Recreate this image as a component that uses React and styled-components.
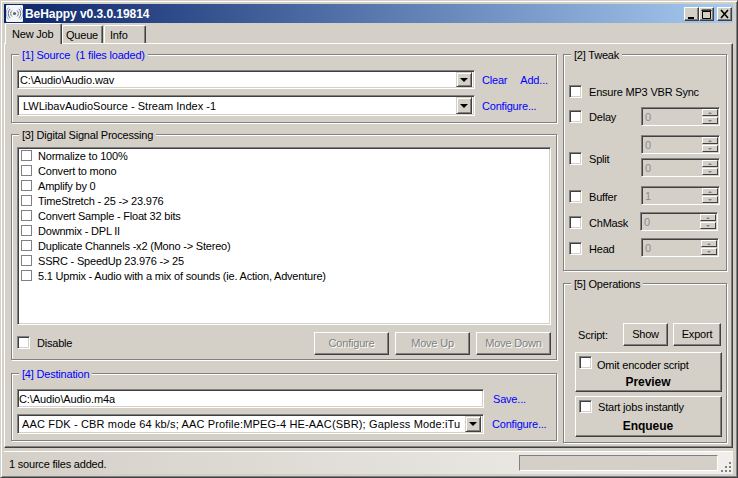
import React from 'react';
import styled, { createGlobalStyle } from 'styled-components';

const Global = createGlobalStyle`
  html, body { margin: 0; padding: 0; background: #d4d0c8; }
  * { box-sizing: border-box; }
`;

const Window = styled.div`
  width: 738px;
  height: 478px;
  background: #d4d0c8;
  border-style: solid;
  border-width: 1px;
  border-color: #d4d0c8 #404040 #404040 #d4d0c8;
  box-shadow: inset 1px 1px 0 #fff, inset -1px -1px 0 #808080;
  padding: 3px;
  display: flex;
  flex-direction: column;
  font: 11px/14px "Liberation Sans", Arial, sans-serif;
  letter-spacing: -0.2px;
  color: #000;
  overflow: hidden;
`;

const TitleBar = styled.div`
  height: 19px;
  flex: none;
  margin: 0 1px 0 0;
  display: flex;
  align-items: center;
  padding: 0 1px 0 2px;
  background: linear-gradient(90deg, #0a246a, #a6caf0);
`;

const AppIcon = styled.svg`
  width: 17px;
  height: 17px;
  flex: none;
`;

const Title = styled.div`
  margin-left: 2px;
  flex: 1;
  color: #fff;
  font: bold 12px/14px "Liberation Sans", Arial, sans-serif;
  letter-spacing: -0.05px;
`;

const CaptionButton = styled.div`
  width: 15px;
  height: 14px;
  margin-left: ${p => p.$gap || 0}px;
  background: #d4d0c8;
  border: 1px solid;
  border-color: #fff #404040 #404040 #fff;
  box-shadow: inset -1px -1px 0 #808080;
  display: flex;
`;

const TabStrip = styled.div`
  height: 21px;
  flex: none;
  display: flex;
  align-items: flex-end;
  padding-left: 1px;
  margin-bottom: -1px;
  position: relative;
  z-index: 1;
`;

const Tab = styled.div`
  width: ${p => p.$w}px;
  height: ${p => (p.$active ? 21 : 18)}px;
  margin-bottom: ${p => (p.$active ? 0 : 1)}px;
  margin-right: ${p => p.$mr || 0}px;
  background: #d4d0c8;
  border-top: 1px solid #fff;
  border-left: 1px solid #fff;
  border-right: 1px solid #404040;
  border-radius: 2px 2px 0 0;
  box-shadow: inset -1px 0 0 #808080;
  padding: ${p => (p.$active ? 3 : 2)}px 0 0 ${p => p.$pl}px;
`;

const TabPage = styled.div`
  height: 405px;
  flex: none;
  margin-right: 1px;
  border: 1px solid;
  border-color: #fff #404040 #404040 #fff;
  box-shadow: inset -1px -1px 0 #808080;
  display: flex;
  padding: 3px 0 0 6px;
  gap: 6px;
`;

const LeftColumn = styled.div`
  width: 546px;
  display: flex;
  flex-direction: column;
  gap: 4px;
`;

const RightColumn = styled.div`
  width: 164px;
  display: flex;
  flex-direction: column;
`;

const Group = styled.fieldset`
  margin: ${p => p.$mt || 0}px 0 0;
  padding: 0;
  min-width: 0;
  height: ${p => p.$h}px;
  flex: none;
  border: 1px solid #808080;
  box-shadow: inset 1px 1px 0 #fff, 1px 1px 0 #fff;
`;

const Legend = styled.legend`
  margin-left: 7px;
  padding: 1px 3px 0 3px;
  height: 14px;
  background: #d4d0c8;
  color: ${p => (p.$blue ? '#0000ff' : '#000')};
  white-space: pre;
`;

const Row = styled.div`
  display: flex;
  align-items: center;
  height: ${p => p.$h}px;
  margin-top: ${p => p.$mt || 0}px;
`;

const Sunken = styled.div`
  width: ${p => p.$w}px;
  height: ${p => p.$h}px;
  flex: none;
  margin-left: ${p => p.$ml || 0}px;
  background: ${p => (p.$disabled ? '#d4d0c8' : '#fff')};
  border: 1px solid;
  border-color: #808080 #fff #fff #808080;
  box-shadow: inset 1px 1px 0 #404040, inset -1px -1px 0 #d4d0c8;
  display: flex;
  align-items: center;
  padding: 0 2px 0 ${p => p.$pl || 3}px;
  white-space: nowrap;
  overflow: hidden;
`;

const ComboText = styled.span`
  flex: 1;
  overflow: hidden;
  letter-spacing: ${p => p.$ls}px;
`;

const DropButton = styled.div`
  width: 16px;
  height: ${p => p.$h || 16}px;
  flex: none;
  background: #d4d0c8;
  border: 1px solid;
  border-color: #d4d0c8 #404040 #404040 #d4d0c8;
  box-shadow: inset 1px 1px 0 #fff, inset -1px -1px 0 #808080;
  display: flex;
  align-items: center;
  justify-content: center;
  &::after {
    content: '';
    border-style: solid;
    border-width: 4px 4px 0;
    border-color: #000 transparent transparent;
  }
`;

const Link = styled.span`
  color: #0000ff;
  margin-left: ${p => p.$ml || 0}px;
  white-space: nowrap;
`;

const ListBox = styled.div`
  width: 534px;
  height: 178px;
  margin: 6px 0 0 5px;
  background: #fff;
  border: 1px solid;
  border-color: #808080 #fff #fff #808080;
  box-shadow: inset 1px 1px 0 #404040, inset -1px -1px 0 #d4d0c8;
  padding: 0 0 0 3px;
`;

const ListItem = styled.div`
  display: flex;
  align-items: center;
  height: 15px;
  white-space: nowrap;
`;

const ListCheck = styled.span`
  width: 11px;
  height: 11px;
  flex: none;
  margin-right: 6px;
  background: #fff;
  border: 1px solid #808080;
`;

const Check = styled.span`
  width: 13px;
  height: 13px;
  flex: none;
  margin-left: ${p => p.$ml || 0}px;
  margin-right: ${p => p.$mr ?? 7}px;
  background: #fff;
  border: 1px solid;
  border-color: #808080 #fff #fff #808080;
  box-shadow: inset 1px 1px 0 #404040, inset -1px -1px 0 #d4d0c8;
  background-clip: padding-box;
`;

const Label = styled.span`
  white-space: nowrap;
  width: ${p => (p.$w ? `${p.$w}px` : 'auto')};
  margin-left: ${p => p.$ml || 0}px;
  flex: ${p => (p.$w ? 'none' : '0 1 auto')};
`;

/* a checkbox and its caption; $drop moves the pair inside a taller row */
const CheckPair = styled.div`
  display: flex;
  align-items: center;
  margin-top: ${p => p.$drop || 0}px;
`;

const Button = styled.div`
  width: ${p => p.$w}px;
  height: ${p => p.$h || 23}px;
  margin-left: ${p => p.$ml || 0}px;
  flex: none;
  background: #d4d0c8;
  border: 1px solid;
  border-color: #fff #404040 #404040 #fff;
  box-shadow: inset -1px -1px 0 #808080;
  display: flex;
  align-items: center;
  justify-content: center;
  padding-bottom: 1px;
  color: ${p => (p.$disabled ? '#808080' : '#000')};
  text-shadow: ${p => (p.$disabled ? '1px 1px 0 #fff' : 'none')};
`;

const Spin = styled(Sunken)`
  padding: 0 1px 0 ${p => p.$pl || 3}px;
  color: #8c8c8c;
  background: #d4d0c8;
  margin-left: auto;
  margin-right: ${p => p.$mr ?? 6}px;
`;

const SpinValue = styled.span`
  flex: 1;
`;

const SpinButtons = styled.div`
  width: 16px;
  height: 15px;
  flex: none;
  display: flex;
  flex-direction: column;
  gap: 1px;
`;

const SpinButton = styled.div`
  flex: 1;
  border: 1px solid;
  border-color: #fff #404040 #404040 #fff;
  display: flex;
  align-items: center;
  justify-content: center;
  &::after {
    content: '';
    border-style: solid;
    border-color: #808080 transparent;
    border-width: ${p => (p.$up ? '0 2px 2px' : '2px 2px 0')};
  }
`;

const SplitBlock = styled.div`
  display: flex;
  flex-direction: column;
  gap: 4px;
  margin-left: auto;
`;

const Bold = styled.div`
  font: bold 12px/14px "Liberation Sans", Arial, sans-serif;
  text-align: center;
  letter-spacing: -0.05px;
  margin: ${p => p.$mt || 0}px 0 0 -4px;
`;

const OpButton = styled.div`
  width: 147px;
  height: ${p => p.$h}px;
  margin: ${p => p.$mt || 0}px 0 0 11px;
  flex: none;
  background: #d4d0c8;
  border: 1px solid;
  border-color: #fff #404040 #404040 #fff;
  box-shadow: inset -1px -1px 0 #808080;
  padding: 3px 0 0 3px;
`;

const OpHeader = styled.div`
  display: flex;
  align-items: center;
  height: 13px;
`;

const OpCaption = styled.span`
  margin-top: ${p => p.$mt || 0}px;
`;

const StatusBar = styled.div`
  flex: 1;
  margin: 3px 1px 0 0;
  display: flex;
  align-items: center;
  padding: 0 1px 0 5px;
  background: linear-gradient(90deg, #d4d0c8 0%, #f0efec 100%);
  border-top: 1px solid #fff;
`;

const StatusText = styled.span`
  flex: 1;
  padding-top: 1px;
`;

const Progress = styled.div`
  width: 199px;
  height: 16px;
  background: #d4d0c8;
  border: 1px solid;
  border-color: #808080 #fff #fff #808080;
`;

const Grip = styled.svg`
  width: 13px;
  height: 13px;
  margin: 7px 0 0 1px;
  flex: none;
`;

const Spinner = ({ value, w = 79, mr, pl }) => (
  <Spin $w={w} $h={19} $disabled $mr={mr} $pl={pl}>
    <SpinValue>{value}</SpinValue>
    <SpinButtons>
      <SpinButton $up />
      <SpinButton />
    </SpinButtons>
  </Spin>
);

const items = [
  'Normalize to 100%',
  'Convert to mono',
  'Amplify by 0',
  'TimeStretch - 25 -> 23.976',
  'Convert Sample - Float 32 bits',
  'Downmix - DPL II',
  'Duplicate Channels -x2 (Mono -> Stereo)',
  'SSRC - SpeedUp 23.976 -> 25',
  '5.1 Upmix - Audio with a mix of sounds (ie. Action, Adventure)',
];

export default function App() {
  return (
    <>
      <Global />
      <Window>
        <TitleBar>
          <AppIcon viewBox="0 0 17 17">
            <rect width="17" height="17" rx="1" fill="#f4f6fa" />
            <circle cx="8.5" cy="8.5" r="1.6" fill="#5a6478" />
            <g fill="none" stroke="#6c7688" strokeWidth="1">
              <path d="M6 5.5a4 4 0 0 0 0 6M11 5.5a4 4 0 0 1 0 6" />
              <path d="M4.2 3.8a6.6 6.6 0 0 0 0 9.4M12.8 3.8a6.6 6.6 0 0 1 0 9.4" />
              <path d="M2.6 2.4a8.8 8.8 0 0 0 0 12.2M14.4 2.4a8.8 8.8 0 0 1 0 12.2" stroke="#a4acb8" />
            </g>
          </AppIcon>
          <Title>BeHappy v0.3.0.19814</Title>
          <CaptionButton>
            <svg width="13" height="12" viewBox="0 0 13 12"><path d="M3 9h6v2H3z" fill="#000" /></svg>
          </CaptionButton>
          <CaptionButton>
            <svg width="13" height="12" viewBox="0 0 13 12"><path d="M2.5 3.5h8v7h-8zM2 2h9v1H2z" fill="none" stroke="#000" /></svg>
          </CaptionButton>
          <CaptionButton $gap={3}>
            <svg width="13" height="12" viewBox="0 0 13 12"><path d="M3 2l7 8M10 2l-7 8" stroke="#000" strokeWidth="1.6" /></svg>
          </CaptionButton>
        </TitleBar>
        <TabStrip>
          <Tab $active $w={57} $pl={6}>New Job</Tab>
          <Tab $w={41} $mr={1} $pl={3}>Queue</Tab>
          <Tab $w={42} $pl={5}>Info</Tab>
        </TabStrip>
        <TabPage>
          <LeftColumn>
            <Group $h={76}>
              <Legend $blue>[1] Source  (1 files loaded)</Legend>
              <Row $h={19} $mt={9}>
                <Sunken $w={458} $h={19} $ml={5} $pl={2}>
                  <ComboText $ls={-0.1}>C:\Audio\Audio.wav</ComboText>
                  <DropButton $h={15} />
                </Sunken>
                <Link $ml={7}>Clear</Link>
                <Link $ml={13}>Add...</Link>
              </Row>
              <Row $h={21} $mt={6}>
                <Sunken $w={458} $h={21} $ml={5} $pl={5}>
                  <ComboText $ls={0}>LWLibavAudioSource - Stream Index -1</ComboText>
                  <DropButton $h={17} />
                </Sunken>
                <Link $ml={7}>Configure...</Link>
              </Row>
            </Group>
            <Group $h={233}>
              <Legend>[3] Digital Signal Processing</Legend>
              <ListBox>
                {items.map(t => (
                  <ListItem key={t}>
                    <ListCheck />
                    {t}
                  </ListItem>
                ))}
              </ListBox>
              <Row $h={23} $mt={7}>
                <CheckPair $drop={-2}>
                  <Check $ml={5} />
                  <Label $w={277}>Disable</Label>
                </CheckPair>
                <Button $w={75} $disabled>Configure</Button>
                <Button $w={75} $ml={6} $disabled>Move Up</Button>
                <Button $w={75} $ml={6} $disabled>Move Down</Button>
              </Row>
            </Group>
            <Group $h={75} $mt={2}>
              <Legend $blue>[4] Destination</Legend>
              <Row $h={19} $mt={9}>
                <Sunken $w={467} $h={19} $ml={5} $pl={1}>
                  <ComboText $ls={-0.1}>C:\Audio\Audio.m4a</ComboText>
                </Sunken>
                <Link $ml={9}>Save...</Link>
              </Row>
              <Row $h={20} $mt={6}>
                <Sunken $w={467} $h={20} $ml={5} $pl={4}>
                  <ComboText $ls={0.15}>AAC FDK - CBR mode 64 kb/s; AAC Profile:MPEG-4 HE-AAC(SBR); Gapless Mode:iTu</ComboText>
                  <DropButton $h={16} />
                </Sunken>
                <Link $ml={8}>Configure...</Link>
              </Row>
            </Group>
          </LeftColumn>
          <RightColumn>
            <Group $h={224}>
              <Legend>[2] Tweak</Legend>
              <Row $h={13} $mt={24}>
                <Check $ml={5} />
                <Label>Ensure MP3 VBR Sync</Label>
              </Row>
              <Row $h={19} $mt={9}>
                <Check $ml={5} />
                <Label>Delay</Label>
                <Spinner value="0" />
              </Row>
              <Row $h={42} $mt={9}>
                <CheckPair $drop={5}>
                  <Check $ml={5} />
                  <Label>Split</Label>
                </CheckPair>
                <SplitBlock>
                  <Spinner value="0" />
                  <Spinner value="0" />
                </SplitBlock>
              </Row>
              <Row $h={19} $mt={9}>
                <CheckPair $drop={2}>
                  <Check $ml={5} />
                  <Label>Buffer</Label>
                </CheckPair>
                <Spinner value="1" />
              </Row>
              <Row $h={19} $mt={7}>
                <CheckPair $drop={2}>
                  <Check $ml={5} />
                  <Label>ChMask</Label>
                </CheckPair>
                <Spinner value="0" w={78} mr={8} />
              </Row>
              <Row $h={19} $mt={7}>
                <CheckPair $drop={2}>
                  <Check $ml={5} />
                  <Label>Head</Label>
                </CheckPair>
                <Spinner value="0" w={78} mr={7} />
              </Row>
            </Group>
            <Group $h={167} $mt={5}>
              <Legend>[5] Operations</Legend>
              <Row $h={23} $mt={33}>
                <Label $w={45} $ml={14}>Script:</Label>
                <Button $w={45}>Show</Button>
                <Button $w={48} $ml={5}>Export</Button>
              </Row>
              <OpButton $h={40} $mt={6}>
                <OpHeader>
                  <Check $mr={5} />
                  <OpCaption $mt={4}>Omit encoder script</OpCaption>
                </OpHeader>
                <Bold $mt={6}>Preview</Bold>
              </OpButton>
              <OpButton $h={41} $mt={4}>
                <OpHeader>
                  <Check $mr={6} />
                  <OpCaption>Start jobs instantly</OpCaption>
                </OpHeader>
                <Bold $mt={6}>Enqueue</Bold>
              </OpButton>
            </Group>
          </RightColumn>
        </TabPage>
        <StatusBar>
          <StatusText>1 source files added.</StatusText>
          <Progress />
          <Grip viewBox="0 0 13 13">
            <g fill="#808080">
              <rect x="10" y="2" width="2" height="2" />
              <rect x="6" y="6" width="2" height="2" />
              <rect x="10" y="6" width="2" height="2" />
              <rect x="2" y="10" width="2" height="2" />
              <rect x="6" y="10" width="2" height="2" />
              <rect x="10" y="10" width="2" height="2" />
            </g>
          </Grip>
        </StatusBar>
      </Window>
    </>
  );
}
